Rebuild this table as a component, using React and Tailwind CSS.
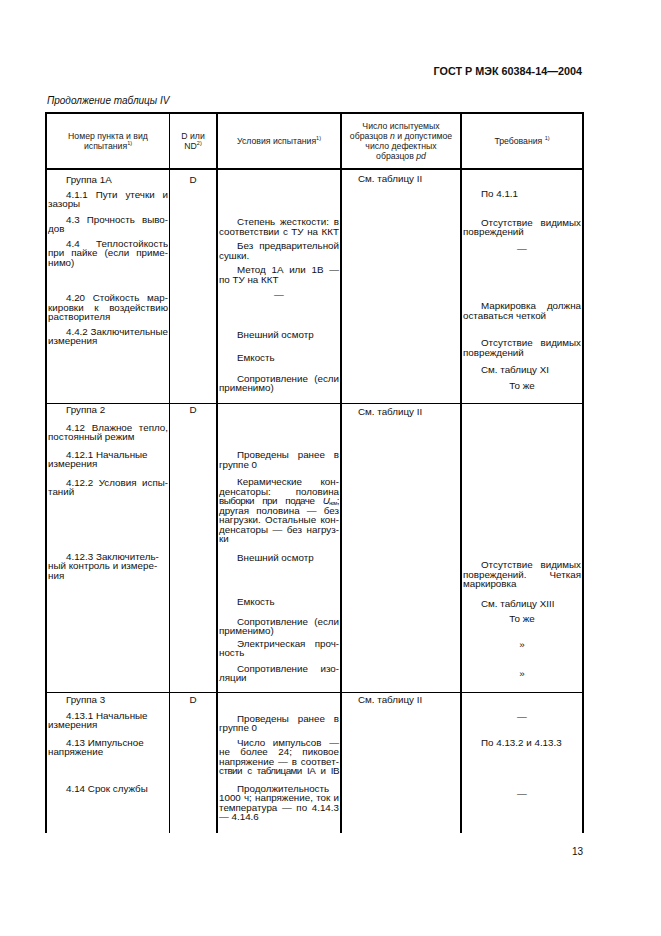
import React from 'react';

// one cell class per column; widths come from the grid template
const cellCls = [
  'border-r border-black px-[1px]',
  'border-r-2 border-black px-[1px]',
  'border-r-2 border-black px-[1px]',
  'border-r-2 border-black px-[1px]',
  'px-[1px]'
];

const groups = [
  {
    rowCls: 'h-[233px]',
    cols: [
      [
        { mt: 'mt-[5px]', lines: ['Группа 1А'] },
        { mt: 'mt-[5px]', lines: ['4.1.1 Пути утечки и', 'зазоры'], j: 1 },
        { mt: 'mt-[6px]', lines: ['4.3 Прочность выво-', 'дов'], j: 1 },
        { mt: 'mt-[5px]', lines: ['4.4 Теплостойкость', 'при пайке (если приме-', 'нимо)'], j: 2 },
        { mt: 'mt-[26px]', lines: ['4.20 Стойкость мар-', 'кировки к воздействию', 'растворителя'], j: 2 },
        { mt: 'mt-[5px]', lines: ['4.4.2 Заключительные', 'измерения'], j: 1 }
      ],
      [{ mt: 'mt-[5px]', lines: ['D'], c: true }],
      [
        { mt: 'mt-[47px]', lines: ['Степень жесткости: в', 'соответствии с ТУ на ККТ'], j: 2 },
        { mt: 'mt-[5px]', lines: ['Без предварительной', 'сушки.'], j: 1 },
        { mt: 'mt-[5px]', lines: ['Метод 1А или 1В —', 'по ТУ на ККТ'], j: 1 },
        { mt: 'mt-[6px]', lines: ['—'], c: true },
        { mt: 'mt-[30px]', lines: ['Внешний осмотр'] },
        { mt: 'mt-[14px]', lines: ['Емкость'] },
        { mt: 'mt-[11px]', lines: ['Сопротивление (если', 'применимо)'], j: 1 }
      ],
      [{ mt: 'mt-[4px]', lines: ['См. таблицу II'], ind: 'pl-[15px]' }],
      [
        { mt: 'mt-[19px]', lines: ['По 4.1.1'] },
        { mt: 'mt-[19px]', lines: ['Отсутствие видимых', 'повреждений'], j: 1 },
        { mt: 'mt-[7px]', lines: ['—'], c: true },
        { mt: 'mt-[48px]', lines: ['Маркировка должна', 'оставаться четкой'], j: 1 },
        { mt: 'mt-[18px]', lines: ['Отсутствие видимых', 'повреждений'], j: 1 },
        { mt: 'mt-[8px]', lines: ['См. таблицу XI'] },
        { mt: 'mt-[6px]', lines: ['То же'], c: true }
      ]
    ]
  },
  {
    rowCls: 'h-[289px] border-t border-black',
    cols: [
      [
        { mt: 'mt-[1px]', lines: ['Группа 2'] },
        { mt: 'mt-[8px]', lines: ['4.12 Влажное тепло,', 'постоянный режим'], j: 1 },
        { mt: 'mt-[8px]', lines: ['4.12.1 Начальные', 'измерения'] },
        { mt: 'mt-[9px]', lines: ['4.12.2 Условия испы-', 'таний'], j: 1 },
        { mt: 'mt-[55px]', lines: ['4.12.3 Заключитель-', 'ный контроль и измере-', 'ния'] }
      ],
      [{ mt: 'mt-[1px]', lines: ['D'], c: true }],
      [
        { mt: 'mt-[46px]', lines: ['Проведены ранее в', 'группе 0'], j: 1 },
        {
          mt: 'mt-[8px]',
          lines: [
            'Керамические кон-',
            'денсаторы: половина',
            '~выборки при подаче U_ном;',
            'другая половина — без',
            'нагрузки. Остальные кон-',
            'денсаторы — без нагруз-',
            'ки'
          ],
          j: 6
        },
        { mt: 'mt-[9px]', lines: ['Внешний осмотр'] },
        { mt: 'mt-[35px]', lines: ['Емкость'] },
        { mt: 'mt-[10px]', lines: ['Сопротивление (если', 'применимо)'], j: 1 },
        { mt: 'mt-[3px]', lines: ['Электрическая проч-', 'ность'], j: 1 },
        { mt: 'mt-[6px]', lines: ['Сопротивление изо-', 'ляции'], j: 1 }
      ],
      [{ mt: 'mt-[3px]', lines: ['См. таблицу II'], ind: 'pl-[15px]' }],
      [
        { mt: 'mt-[156px]', lines: ['Отсутствие видимых', 'повреждений. Четкая', 'маркировка'], j: 2 },
        { mt: 'mt-[10px]', lines: ['См. таблицу XIII'] },
        { mt: 'mt-[5.5px]', lines: ['То же'], c: true },
        { mt: 'mt-[17px]', lines: ['»'], c: true },
        { mt: 'mt-[19px]', lines: ['»'], c: true }
      ]
    ]
  },
  {
    rowCls: 'h-[141px] border-t border-black',
    cols: [
      [
        { mt: 'mt-[2px]', lines: ['Группа 3'] },
        { mt: 'mt-[6px]', lines: ['4.13.1 Начальные', 'измерения'] },
        { mt: 'mt-[8px]', lines: ['4.13 Импульсное', 'напряжение'] },
        { mt: 'mt-[27px]', lines: ['4.14 Срок службы'] }
      ],
      [{ mt: 'mt-[2px]', lines: ['D'], c: true }],
      [
        { mt: 'mt-[20.5px]', lines: ['Проведены ранее в', 'группе 0'], j: 1 },
        {
          mt: 'mt-[5px]',
          lines: ['Число импульсов —', 'не более 24; пиковое', 'напряжение — в соответ-', '~ствии с таблицами IA и IB'],
          j: 4
        },
        {
          mt: 'mt-[8px]',
          lines: ['Продолжительность', '1000 ч; напряжение, ток и', 'температура — по 4.14.3', '— 4.14.6'],
          j: 3
        }
      ],
      [{ mt: 'mt-[2px]', lines: ['См. таблицу II'], ind: 'pl-[15px]' }],
      [
        { mt: 'mt-[19px]', lines: ['—'], c: true },
        { mt: 'mt-[16px]', lines: ['По 4.13.2 и 4.13.3'] },
        { mt: 'mt-[41.5px]', lines: ['—'], c: true }
      ]
    ]
  }
];

const Word = ({ w }) => {
  if (w.startsWith('U_')) {
    return (
      <span>
        <i>U</i>
        <sub className="text-[5px] leading-none -bottom-[0.5px]">ном</sub>;
      </span>
    );
  }
  return <span>{w}</span>;
};

const Para = ({ p }) => {
  const justified = p.j || 0;
  return (
    <div className={p.mt}>
      {p.lines.map((raw, i) => {
        // "~" in front of a line = squeeze it a little, the scan is condensed there
        const tight = raw.startsWith('~');
        const line = tight ? raw.slice(1) : raw;
        const track = tight ? 'tracking-[-0.5px]' : '';
        const indent = i === 0 && !p.c ? p.ind || 'pl-[18px]' : '';
        if (p.c) {
          return (
            <div key={i} className="h-[9.5px] leading-[9.5px] whitespace-nowrap text-center">
              {line}
            </div>
          );
        }
        if (i < justified) {
          return (
            <div
              key={i}
              className={`flex justify-between gap-[2px] h-[9.5px] leading-[9.5px] whitespace-nowrap ${indent} ${track}`}
            >
              {line.split(' ').map((w, k) => (
                <Word key={k} w={w} />
              ))}
            </div>
          );
        }
        return (
          <div key={i} className={`h-[9.5px] leading-[9.5px] whitespace-nowrap ${indent} ${track}`}>
            {line.split(' ').map((w, k) => (
              <React.Fragment key={k}>
                {k > 0 && ' '}
                <Word w={w} />
              </React.Fragment>
            ))}
          </div>
        );
      })}
    </div>
  );
};

const Sup = ({ children }) => (
  <sup className="text-[5.5px] -top-[4px]">{children}</sup>
);

const App = () => {
  return (
    <div className="w-[661px] h-[936px] bg-white text-[#111] pt-[64px] pl-[45px] font-['Liberation_Sans',Arial,sans-serif]">
      <div className="w-[539px] pr-[2px] text-right text-[10.8px] leading-[14px] font-bold">
        ГОСТ Р МЭК 60384-14—2004
      </div>
      <div className="mt-[17px] pl-[2px] text-[10px] leading-[12px] italic">
        Продолжение таблицы IV
      </div>

      <div className="mt-[5px] w-[539px] border-t-2 border-l-2 border-r-2 border-black">
        {/* header */}
        <div className="grid grid-cols-[123px_48px_124px_120px_120px] h-[56px] border-b-2 border-black text-[8.7px] leading-[10px] text-[#1a1a1a]">
          <div className={`${cellCls[0]} flex flex-col items-center justify-center text-center`}>
            <div>Номер пункта и вид</div>
            <div>
              испытания<Sup>1)</Sup>
            </div>
          </div>
          <div className={`${cellCls[1]} flex flex-col items-center justify-center text-center`}>
            <div>D или</div>
            <div>
              ND<Sup>2)</Sup>
            </div>
          </div>
          <div className={`${cellCls[2]} flex flex-col items-center justify-center text-center`}>
            <div>
              Условия испытания<Sup>1)</Sup>
            </div>
          </div>
          <div className={`${cellCls[3]} flex flex-col items-center justify-center text-center`}>
            <div>Число испытуемых</div>
            <div>
              образцов <i>n</i> и допустимое
            </div>
            <div>число дефектных</div>
            <div>
              образцов <i>pd</i>
            </div>
          </div>
          <div className={`${cellCls[4]} flex flex-col items-center justify-center text-center`}>
            <div>
              Требования <Sup>1)</Sup>
            </div>
          </div>
        </div>

        {/* groups */}
        {groups.map((g, gi) => (
          <div
            key={gi}
            className={`grid grid-cols-[123px_48px_124px_120px_120px] text-[9.8px] ${g.rowCls}`}
          >
            {g.cols.map((col, ci) => (
              <div key={ci} className={cellCls[ci]}>
                {col.map((p, pi) => (
                  <Para key={pi} p={p} />
                ))}
              </div>
            ))}
          </div>
        ))}
      </div>

      <div className="mt-[13px] w-[539px] pr-[1px] text-right text-[10px] leading-[12px]">13</div>
    </div>
  );
};

export default App;
